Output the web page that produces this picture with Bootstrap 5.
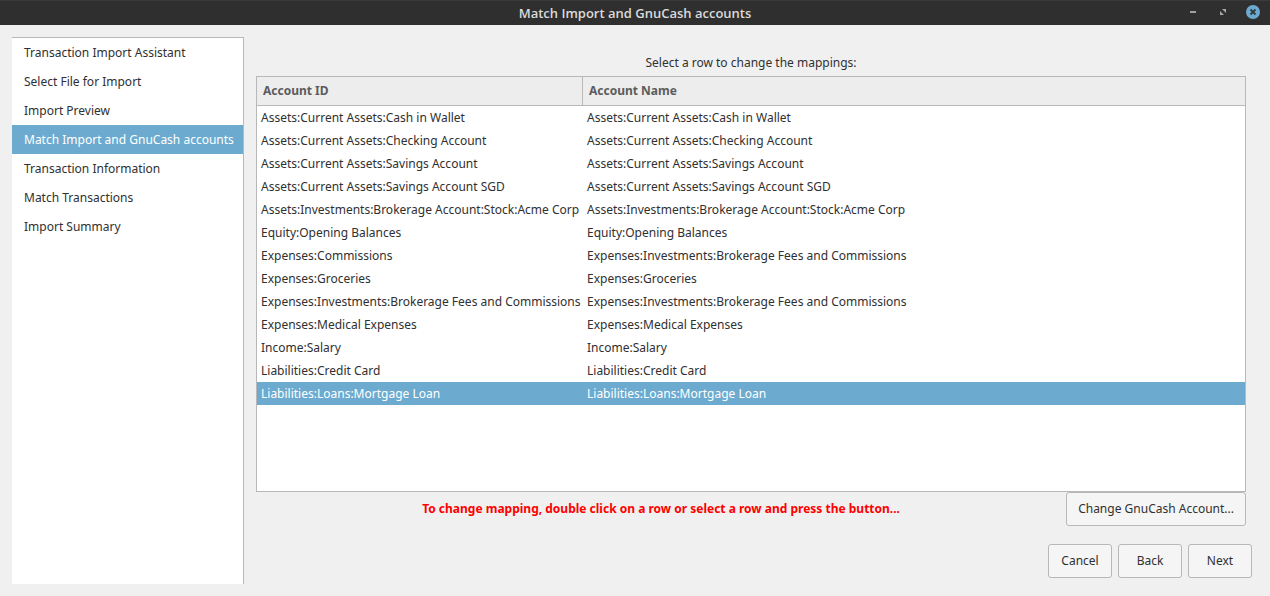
<!DOCTYPE html>
<html lang="en">
<head>
<meta charset="utf-8">
<meta name="viewport" content="width=device-width, initial-scale=1">
<title>Match Import and GnuCash accounts</title>
<link href="https://cdn.jsdelivr.net/npm/bootstrap@5.3.0/dist/css/bootstrap.min.css" rel="stylesheet">
<style>
body{font:12px/18px "Noto Sans",sans-serif;color:#303030;background:#f0f0f0}
.titlebar{height:25px;background:#2f2f2f;box-shadow:inset 0 1px #3a3a3a;color:#dadada}
.titlebar h1{font:600 13px/18px "Open Sans","Noto Sans",sans-serif}
.win-controls{top:5px;right:10px;gap:16px}
.win-btn{width:14px;height:14px;padding:0;border:0;background:none;line-height:0}
.work{padding:12px;min-height:0}
.steps{width:232px;background:#fff;border-top:1px solid #b8b8b8;border-right:1px solid #b8b8b8}
.steps .nav-link{padding:0 12px;line-height:29px;color:#303030;white-space:nowrap}
.steps .nav-link.active{background:#6cabcf;color:#fff}
.side{min-width:0;padding:17px 6px 6px 12px}
.page-body{min-height:0;padding-right:6px}
.grid-box{background:#fff;border:1px solid #b8b8b8;min-height:0}
.accounts{width:100%;table-layout:fixed;border-collapse:separate;border-spacing:0}
.accounts th{height:29px;padding:0 6px;background:#ededed;border-bottom:1px solid #b8b8b8;font-weight:700;color:#5c5c5c}
.accounts th:first-child{width:326px;border-right:1px solid #b8b8b8}
.accounts td{height:23px;padding:0 4px;white-space:nowrap}
.accounts tr.chosen td{background:#6cabcf;color:#fff}
.hint{color:#f00;font-weight:700}
.tool{height:34px;padding:0 11px;font-size:12px;line-height:18px;color:#303030;background:#f5f5f5;border:1px solid #b8b8b8;border-radius:3px}
.tool:hover{background:#fafafa;border-color:#a8a8a8}
.nav-tool{width:64px;padding:0}
.actions{gap:6px;margin-top:18px}
</style>
</head>
<body class="vh-100 d-flex flex-column overflow-hidden">
<header class="titlebar position-relative d-flex align-items-center justify-content-center flex-shrink-0">
  <h1 class="m-0">Match Import and GnuCash accounts</h1>
  <div class="win-controls position-absolute d-flex align-items-center">
    <button type="button" class="win-btn" aria-label="Minimize"><svg width="14" height="14"><path d="M4 6h6v2H4z" fill="#a0a0a0"/></svg></button>
    <button type="button" class="win-btn" aria-label="Restore"><svg width="14" height="14"><path d="M6 4h4v4zM4 6v4h4z" fill="#a8a8a8"/></svg></button>
    <button type="button" class="win-btn" aria-label="Close"><svg width="14" height="14"><circle cx="7" cy="7" r="7" fill="#6cabcf"/><path d="M4.500 4.500l5 5m0-5l-5 5" stroke="#2f3a40" stroke-width="1.800" fill="none"/></svg></button>
  </div>
</header>
<div class="work d-flex flex-grow-1">
  <nav class="steps nav flex-column flex-nowrap flex-shrink-0" aria-label="Steps">
    <a class="nav-link" href="#">Transaction Import Assistant</a>
    <a class="nav-link" href="#">Select File for Import</a>
    <a class="nav-link" href="#">Import Preview</a>
    <a class="nav-link active" aria-current="step" href="#">Match Import and GnuCash accounts</a>
    <a class="nav-link" href="#">Transaction Information</a>
    <a class="nav-link" href="#">Match Transactions</a>
    <a class="nav-link" href="#">Import Summary</a>
  </nav>
  <div class="side d-flex flex-column flex-grow-1">
    <main class="page-body d-flex flex-column flex-grow-1">
      <p class="text-center mb-1">Select a row to change the mappings:</p>
      <div class="grid-box flex-grow-1 overflow-auto">
        <table class="accounts">
          <thead><tr><th scope="col">Account ID</th><th scope="col">Account Name</th></tr></thead>
          <tbody>
            <tr><td>Assets:Current Assets:Cash in Wallet</td><td>Assets:Current Assets:Cash in Wallet</td></tr>
            <tr><td>Assets:Current Assets:Checking Account</td><td>Assets:Current Assets:Checking Account</td></tr>
            <tr><td>Assets:Current Assets:Savings Account</td><td>Assets:Current Assets:Savings Account</td></tr>
            <tr><td>Assets:Current Assets:Savings Account SGD</td><td>Assets:Current Assets:Savings Account SGD</td></tr>
            <tr><td>Assets:Investments:Brokerage Account:Stock:Acme Corp</td><td>Assets:Investments:Brokerage Account:Stock:Acme Corp</td></tr>
            <tr><td>Equity:Opening Balances</td><td>Equity:Opening Balances</td></tr>
            <tr><td>Expenses:Commissions</td><td>Expenses:Investments:Brokerage Fees and Commissions</td></tr>
            <tr><td>Expenses:Groceries</td><td>Expenses:Groceries</td></tr>
            <tr><td>Expenses:Investments:Brokerage Fees and Commissions</td><td>Expenses:Investments:Brokerage Fees and Commissions</td></tr>
            <tr><td>Expenses:Medical Expenses</td><td>Expenses:Medical Expenses</td></tr>
            <tr><td>Income:Salary</td><td>Income:Salary</td></tr>
            <tr><td>Liabilities:Credit Card</td><td>Liabilities:Credit Card</td></tr>
            <tr class="chosen"><td>Liabilities:Loans:Mortgage Loan</td><td>Liabilities:Loans:Mortgage Loan</td></tr>
          </tbody>
        </table>
      </div>
      <div class="d-flex align-items-center">
        <p class="hint flex-grow-1 text-center m-0">To change mapping, double click on a row or select a row and press the button...</p>
        <button type="button" class="tool">Change GnuCash Account...</button>
      </div>
    </main>
    <div class="actions d-flex justify-content-end">
      <button type="button" class="tool nav-tool">Cancel</button>
      <button type="button" class="tool nav-tool">Back</button>
      <button type="button" class="tool nav-tool">Next</button>
    </div>
  </div>
</div>
<script src="https://cdn.jsdelivr.net/npm/bootstrap@5.3.0/dist/js/bootstrap.bundle.min.js"></script>
</body>
</html>
